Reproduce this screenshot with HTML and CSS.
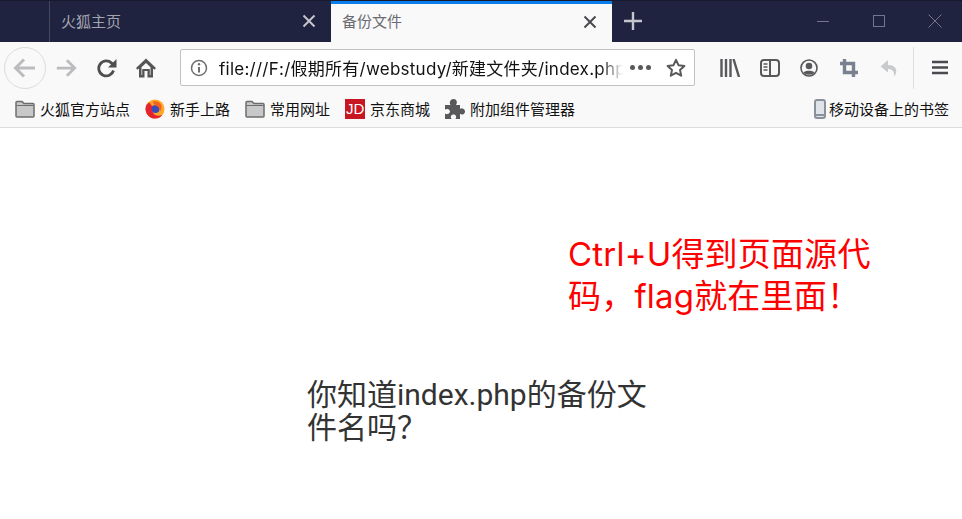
FILE: index.html
```html
<!DOCTYPE html>
<html lang="zh-CN">
<head>
    <meta charset="UTF-8">
    <title>备份文件</title>
    <link rel="stylesheet" href="styles.css">
</head>
<body>
<div class="tabbar">
    <div class="tab">
        <span class="tab__title">火狐主页</span>
        <svg class="tab__close" width="14" height="14" viewBox="0 0 14 14"><path d="M1.500 1.500l11 11M12.500 1.500l-11 11" stroke="#c4c5cd" stroke-width="2"/></svg>
    </div>
    <div class="tab tab_active">
        <span class="tab__title">备份文件</span>
        <svg class="tab__close" width="14" height="14" viewBox="0 0 14 14"><path d="M1.500 1.500l11 11M12.500 1.500l-11 11" stroke="#4a4a4f" stroke-width="2"/></svg>
    </div>
    <svg class="tabbar__new" width="18" height="18" viewBox="0 0 18 18"><path d="M9 0v18M0 9h18" stroke="#c4c5cd" stroke-width="2.400"/></svg>
    <div class="window-buttons">
        <svg width="14" height="14" viewBox="0 0 14 14"><path d="M1 7.500h12" stroke="#74768a" stroke-width="1"/></svg>
        <svg width="14" height="14" viewBox="0 0 14 14"><rect x="1.500" y="1.500" width="11" height="11" fill="none" stroke="#74768a"/></svg>
        <svg width="14" height="14" viewBox="0 0 14 14"><path d="M.5.5l13 13M13.500.5l-13 13" stroke="#74768a"/></svg>
    </div>
</div>

<div class="navbar">
    <div class="back-button">
        <svg width="24" height="24" viewBox="0 0 24 24"><path d="M22 12H3M11 3.500L2.500 12l8.500 8.500" fill="none" stroke="#bcbcbe" stroke-width="3"/></svg>
    </div>
    <svg class="navbar__icon forward" width="22" height="22" viewBox="0 0 24 24"><path d="M2 12h19M13 3.500l8.500 8.500-8.500 8.500" fill="none" stroke="#bcbcbe" stroke-width="3"/></svg>
    <svg class="navbar__icon reload" width="20" height="20" viewBox="0 0 20 20"><path d="M16.500 12.500A7.500 7.500 0 1 1 14.500 5L17 7.500" fill="none" stroke="#4f4f52" stroke-width="2.800"/><path d="M19.500 1v8.500H11z" fill="#4f4f52"/></svg>
    <svg class="navbar__icon home" width="20" height="20" viewBox="0 0 20 20"><path d="M10 .5L0 10l1.500 1.700L3 10.400V19.500h5.500V13h3v6.500H17v-9.100l1.500 1.300L20 10z" fill="#555558"/><path d="M10 5l4.500 4.200V17h-.7v-6H6.200v6h-.7V9.200z" fill="#f9f9fa"/></svg>
    <div class="urlbar">
        <svg class="urlbar__info" width="18" height="18" viewBox="0 0 18 18"><circle cx="9" cy="9" r="7.500" fill="none" stroke="#6f6f72" stroke-width="1.500"/><path d="M9 8v5.500" stroke="#6f6f72" stroke-width="2"/><circle cx="9" cy="5.300" r="1.200" fill="#6f6f72"/></svg>
        <div class="urlbar__text">file:///F:/假期所有/webstudy/新建文件夹/index.php</div>
        <div class="urlbar__more"><i></i><i></i><i></i></div>
        <svg class="urlbar__star" width="20" height="20" viewBox="0 0 20 20"><path d="M10 1.800l2.500 5.400 5.900.7-4.400 4 1.200 5.800L10 14.800l-5.200 2.900L6 11.900l-4.400-4 5.900-.7z" fill="none" stroke="#59595c" stroke-width="2" stroke-linejoin="round"/></svg>
    </div>
    <div class="toolbar">
        <svg width="20" height="18" viewBox="0 0 20 18"><path d="M1.500 0v18M6 0v18M10.500 0v18M13.500 0l5.500 18" stroke="#59595c" stroke-width="2.400"/></svg>
        <svg width="20" height="18" viewBox="0 0 20 18"><rect x="1" y="1" width="18" height="16" rx="3" fill="none" stroke="#59595c" stroke-width="2"/><path d="M10 1v16" stroke="#59595c" stroke-width="2"/><path d="M3.500 5h4M3.500 8h4M3.500 11h4" stroke="#59595c" stroke-width="1.400"/></svg>
        <svg width="18" height="18" viewBox="0 0 18 18"><circle cx="9" cy="9" r="8" fill="none" stroke="#59595c" stroke-width="1.600"/><circle cx="9" cy="7" r="3.300" fill="#59595c"/><path d="M3.500 13.500c1.500-2.500 9.500-2.500 11 0-2.500 3-8.500 3-11 0z" fill="#59595c"/></svg>
        <svg class="toolbar__crop" width="18" height="18" viewBox="0 0 18 18"><path d="M4.500 0v13.500H18M0 4.500h13.500V18" fill="none" stroke="#79808f" stroke-width="3.400"/></svg>
        <svg class="toolbar__undo" width="18" height="18" viewBox="0 0 18 18"><path d="M8 1L.5 7.500 8 13.500V10c3.500 0 5.500 1.500 6 4.500l.5 3c2-3.500 2.500-6.500.5-9-1.500-1.700-4-2.500-7-2.500z" fill="#c9cacb"/></svg>
    </div>
    <div class="navbar__sep"></div>
    <svg class="menu" width="16" height="15" viewBox="0 0 16 15"><path d="M0 2h16M0 7.500h16M0 13h16" stroke="#4a4a4f" stroke-width="2.400"/></svg>
</div>

<div class="bookmarks">
    <div class="bookmark">
        <svg width="20" height="18" viewBox="0 0 20 18"><path d="M1 16V2.500C1 1.800 1.500 1.500 2 1.500h5l2 2h9c.6 0 1 .4 1 1V16c0 .6-.4 1-1 1H2c-.6 0-1-.4-1-1z" fill="#c8c8c8" stroke="#6d6d6d" stroke-width="1.500"/><path d="M1.500 5.500h17" stroke="#6d6d6d"/></svg>
        <span>火狐官方站点</span>
    </div>
    <div class="bookmark">
        <svg width="20" height="20" viewBox="0 0 20 20"><circle cx="10" cy="10" r="9.500" fill="#ffa726"/><path d="M1 7a9.500 9.500 0 0 0 9.500 12.500c3 0 5.500-1.500 7-4-3 2-7 1.500-9-1C6.500 12 7.500 9.500 9.500 8.500L6.500 6.500 4.500 3.500C2.500 4.500 1.500 5.500 1 7z" fill="#e5232f"/><circle cx="10.500" cy="10" r="4" fill="#3d4bb8"/><path d="M7.500 2.500c3-1 7 0 8.500 3 1 2.500.5 5-1 7 0-3-2-5.500-5-6z" fill="#f7601f"/></svg>
        <span>新手上路</span>
    </div>
    <div class="bookmark">
        <svg width="20" height="18" viewBox="0 0 20 18"><path d="M1 16V2.500C1 1.800 1.500 1.500 2 1.500h5l2 2h9c.6 0 1 .4 1 1V16c0 .6-.4 1-1 1H2c-.6 0-1-.4-1-1z" fill="#c8c8c8" stroke="#6d6d6d" stroke-width="1.500"/><path d="M1.500 5.500h17" stroke="#6d6d6d"/></svg>
        <span>常用网址</span>
    </div>
    <div class="bookmark">
        <div class="jd-logo">JD</div>
        <span>京东商城</span>
    </div>
    <div class="bookmark">
        <svg width="20" height="20" viewBox="0 0 20 20"><path d="M0 6h5.500C5 5 4.500 4 5 2.500 5.500.8 7 0 8.500 0s3 .8 3.300 2.500c.2 1.500-.3 2.500-.8 3.500H15v4c1-.5 1.500-.8 2.500-.6 1.500.3 2.500 1.600 2.500 3s-1 2.800-2.500 3c-1 .2-1.500-.1-2.500-.6V20H10.500c.5-1 .8-1.500.6-2.500-.3-1.500-1.500-2-2.600-2s-2.300.5-2.600 2c-.2 1 .1 1.500.6 2.500H0v-5.500c1 .5 1.500.8 2.500.6 1.500-.3 2.500-1.500 2.500-2.600S4 10.300 2.500 10C1.500 9.800 1 10.100 0 10.600z" fill="#59595c"/></svg>
        <span>附加组件管理器</span>
    </div>
    <div class="bookmark bookmark_mobile">
        <svg width="12" height="20" viewBox="0 0 12 20"><rect x="1" y="1" width="10" height="18" rx="2" fill="#dfe4ea" stroke="#8a919b" stroke-width="2"/><path d="M1 16h10" stroke="#8a919b" stroke-width="2"/></svg>
        <span>移动设备上的书签</span>
    </div>
</div>

<div class="page">
    <p class="hint">Ctrl+U得到页面源代码，flag就在里面！</p>
    <p class="question">你知道index.php的备份文件名吗？</p>
</div>
</body>
</html>
```

FILE: styles.css
```css
* { box-sizing: border-box; }
body {
    margin: 0;
    font-family: "Noto Sans", "Noto Sans CJK SC", sans-serif;
    background: #fff;
    overflow: hidden;
}
svg { flex: none; display: block; }

.tabbar {
    display: flex;
    align-items: stretch;
    height: 42px;
    padding-left: 49px;
    background: #20233f;
    border-top: 1px solid #17192e;
}
.tab {
    display: flex;
    align-items: center;
    justify-content: space-between;
    width: 282px;
    padding: 0 15px 2px 11px;
    font-size: 15px;
    color: #a3a4b0;
    border-left: 1px solid #45475f;
}
.tab_active {
    background: #f9f9fa;
    color: #6c6c70;
    border-left: 0;
    border-top: 3px solid #0a7ee8;
    width: 281px;
    padding-left: 11px;
}
.tab_active .tab__title { margin-bottom: 3px; }
.tabbar__new { align-self: center; margin-left: 12px; margin-bottom: 2px; }
.window-buttons {
    display: flex;
    align-items: center;
    gap: 42px;
    margin-left: auto;
    margin-bottom: 2px;
    padding-right: 20px;
}

.navbar {
    display: flex;
    align-items: center;
    height: 48px;
    padding-top: 3px;
    background: #f9f9fa;
}
.back-button {
    display: flex;
    align-items: center;
    justify-content: center;
    width: 42px;
    height: 42px;
    margin-left: 4px;
    border: 1px solid #dcdcdc;
    border-radius: 50%;
}
.forward { margin-left: 9px; }
.reload { margin-left: 20px; }
.home { margin-left: 19px; }
.urlbar {
    display: flex;
    align-items: center;
    width: 515px;
    height: 37px;
    margin-left: 24px;
    padding: 0 8px 0 9px;
    background: #fff;
    border: 1px solid #c2c2c4;
    border-radius: 2px;
}
.urlbar__text {
    width: 405px;
    margin-left: 11px;
    font-family: Inter, "Noto Sans CJK SC", sans-serif;
    font-size: 17px;
    letter-spacing: 0.25px;
    color: #111;
    white-space: nowrap;
    overflow: hidden;
    -webkit-mask-image: linear-gradient(to left, transparent, #000 22px);
    mask-image: linear-gradient(to left, transparent, #000 22px);
}
.urlbar__more {
    display: flex;
    gap: 3px;
    margin-left: 7px;
}
.urlbar__more i {
    width: 5px;
    height: 5px;
    border-radius: 50%;
    background: #59595c;
}
.urlbar__star { margin-left: 15px; }
.toolbar {
    display: flex;
    align-items: center;
    gap: 20px;
    margin-left: 25px;
}
.toolbar__crop { margin-left: 2px; }
.toolbar__undo { margin-left: 2px; }
.navbar__sep {
    width: 1px;
    height: 42px;
    margin-left: 15px;
    background: #dedee0;
}
.menu { margin-left: 18px; }

.bookmarks {
    display: flex;
    align-items: center;
    gap: 15px;
    height: 38px;
    padding: 0 13px 0 15px;
    background: #f9f9fa;
    border-bottom: 1px solid #dcdcde;
    font-size: 15px;
    color: #111;
}
.bookmark {
    display: flex;
    align-items: center;
    gap: 5px;
}
.bookmark_mobile {
    gap: 3px;
    margin-left: auto;
}
.jd-logo {
    width: 20px;
    height: 20px;
    background: #c91623;
    color: #fff;
    font-family: "Liberation Sans", sans-serif;
    font-size: 15px;
    line-height: 20px;
    text-align: center;
}

.page {
    height: 391px;
    padding-top: 105px;
    padding-left: 568px;
}
.hint {
    width: 310px;
    margin: 0;
    font-family: Inter, "Noto Sans CJK SC", sans-serif;
    font-size: 33px;
    letter-spacing: 0.2px;
    line-height: 42px;
    color: #ff0000;
}
.question {
    width: 345px;
    margin: 61px 0 0 -261px;
    font-family: Roboto, "Noto Sans CJK SC", sans-serif;
    font-size: 30px;
    line-height: 33px;
    color: #333;
}
```
